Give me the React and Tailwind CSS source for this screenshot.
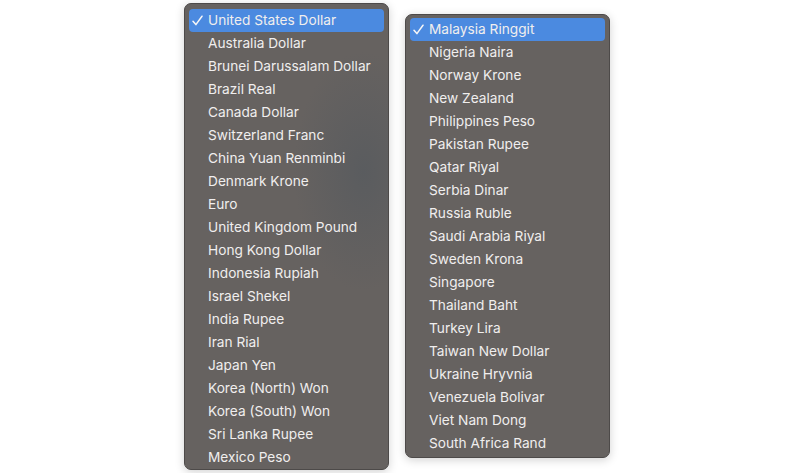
import React from "react";

const left = [
  "United States Dollar",
  "Australia Dollar",
  "Brunei Darussalam Dollar",
  "Brazil Real",
  "Canada Dollar",
  "Switzerland Franc",
  "China Yuan Renminbi",
  "Denmark Krone",
  "Euro",
  "United Kingdom Pound",
  "Hong Kong Dollar",
  "Indonesia Rupiah",
  "Israel Shekel",
  "India Rupee",
  "Iran Rial",
  "Japan Yen",
  "Korea (North) Won",
  "Korea (South) Won",
  "Sri Lanka Rupee",
  "Mexico Peso",
];

const right = [
  "Malaysia Ringgit",
  "Nigeria Naira",
  "Norway Krone",
  "New Zealand",
  "Philippines Peso",
  "Pakistan Rupee",
  "Qatar Riyal",
  "Serbia Dinar",
  "Russia Ruble",
  "Saudi Arabia Riyal",
  "Sweden Krona",
  "Singapore",
  "Thailand Baht",
  "Turkey Lira",
  "Taiwan New Dollar",
  "Ukraine Hryvnia",
  "Venezuela Bolivar",
  "Viet Nam Dong",
  "South Africa Rand",
];

function Check() {
  return (
    <svg width="11" height="11" viewBox="0 0 11 11" className="block">
      <path
        d="M1 6.2 L3.9 9.6 L10 1.2"
        fill="none"
        stroke="#f6f6f6"
        strokeWidth="1.5"
        strokeLinecap="round"
        strokeLinejoin="round"
      />
    </svg>
  );
}

function Item({ label, selected }) {
  return (
    <div
      className={
        "flex items-center h-[23px] mx-[4px] rounded-[4px] " +
        (selected ? "bg-[#4b8ae0]" : "")
      }
    >
      <span className="w-[19px] pl-[3px] flex items-center">
        {selected ? <Check /> : null}
      </span>
      <span className="text-[13.7px] leading-none text-[#f0eeee]">
        {label}
      </span>
    </div>
  );
}

function Menu({ items, className }) {
  return (
    <div
      className={
        "w-[205px] rounded-[7px] border border-[#4d4a49] bg-[#666260] shadow-[0_2px_10px_rgba(0,0,0,0.18)] " +
        className
      }
    >
      {items.map((it, i) => (
        <Item key={it} label={it} selected={i === 0} />
      ))}
    </div>
  );
}

export default function App() {
  return (
    <div
      className="w-[793px] h-[473px] bg-white flex items-start overflow-hidden"
      style={{ fontFamily: "Inter, 'Noto Sans', sans-serif" }}
    >
      <Menu
        items={left}
        className="ml-[184px] mt-[3px] pt-[5px] pb-0 bg-[radial-gradient(ellipse_70px_120px_at_88%_36%,rgba(82,88,94,0.6),rgba(102,98,96,0))]"
      />
      <Menu items={right} className="ml-[16px] mt-[14px] pt-[3px] pb-[2px]" />
    </div>
  );
}
